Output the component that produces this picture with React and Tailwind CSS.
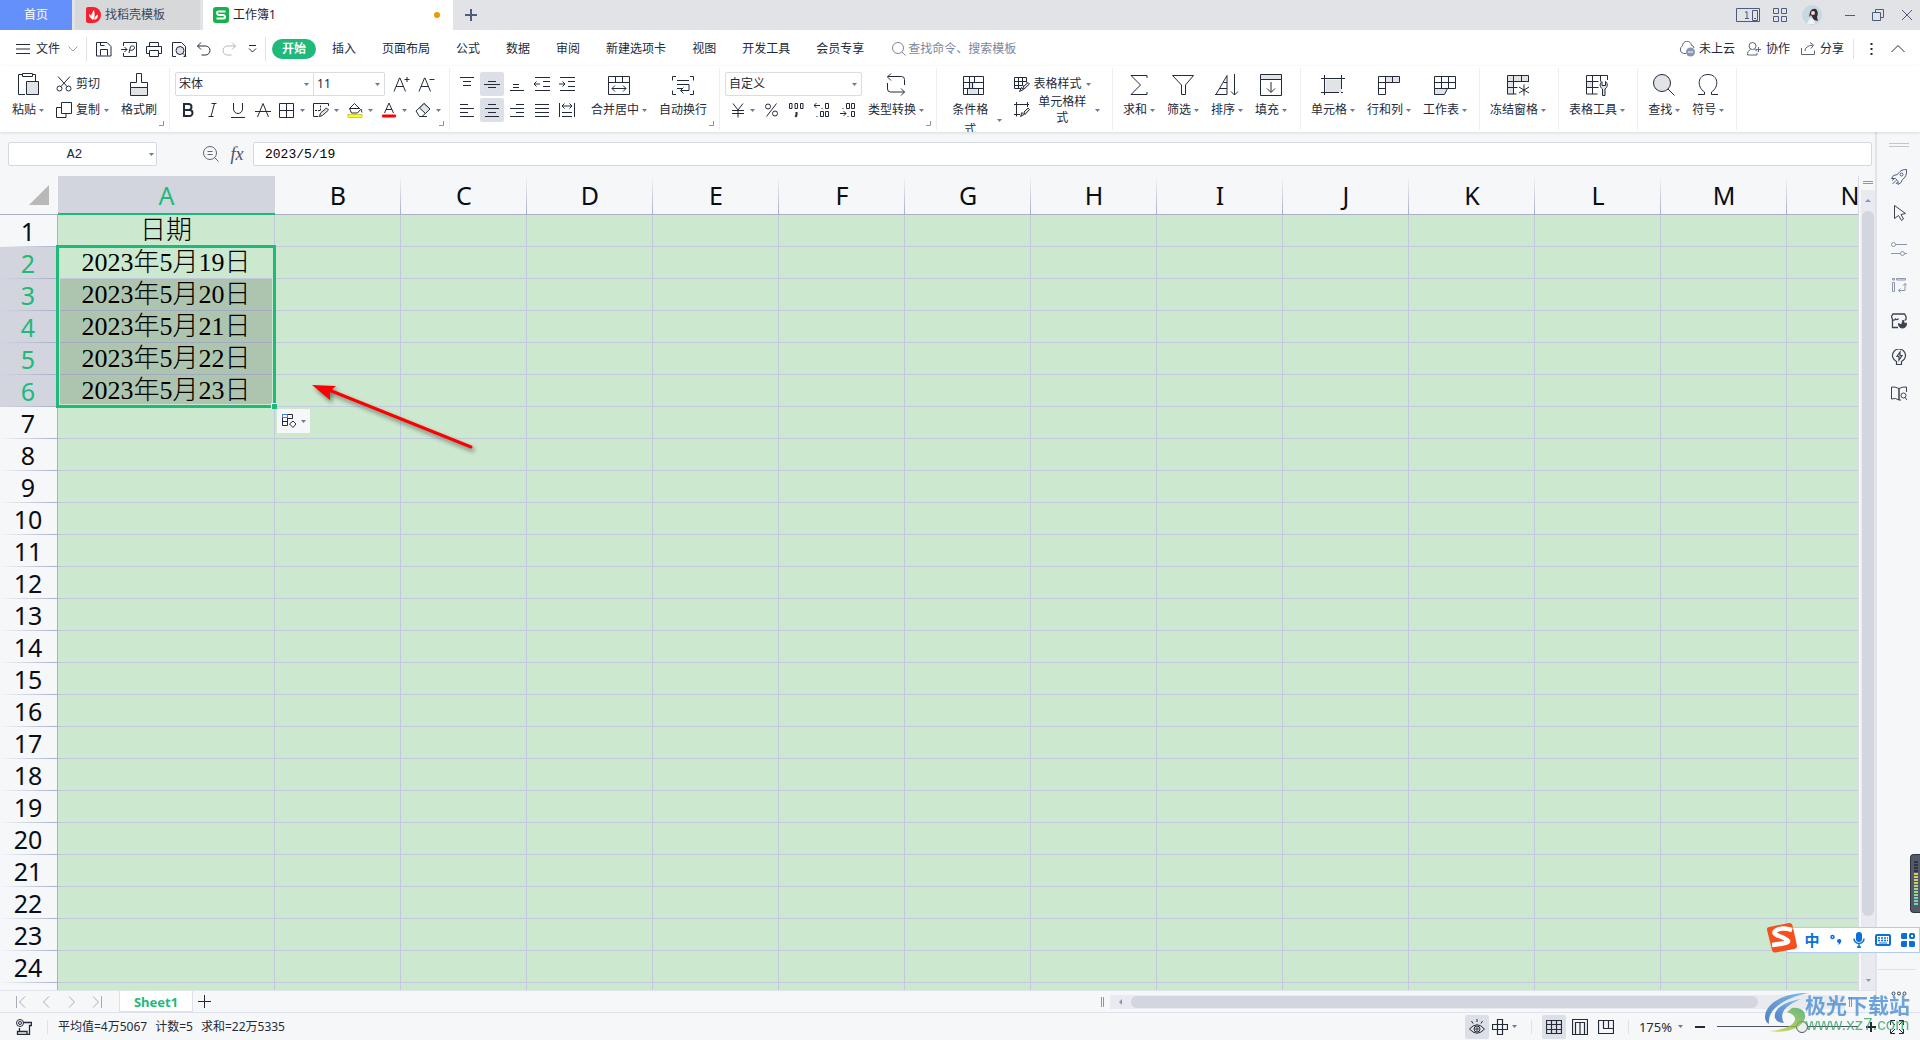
import clsx from "clsx";

const COLUMNS = ["A", "B", "C", "D", "E", "F", "G", "H", "I", "J", "K", "L", "M", "N"];
const COLUMN_A = ["日期", "2023年5月19日", "2023年5月20日", "2023年5月21日", "2023年5月22日", "2023年5月23日"];
const ROWS = Array.from({ length: 25 }, (_, i) => i + 1);
const MENU = ["开始", "插入", "页面布局", "公式", "数据", "审阅", "新建选项卡", "视图", "开发工具", "会员专享"];

function Svg({ w = 16, h = 16, children, className }) {
  return (
    <svg
      width={w}
      height={h}
      viewBox={`0 0 ${w} ${h}`}
      fill="none"
      stroke="currentColor"
      strokeWidth="1"
      aria-hidden="true"
      className={clsx("shrink-0", className)}
    >
      {children}
    </svg>
  );
}

const Caret = ({ className }) => (
  <Svg w={5} h={3} className={clsx("text-[#6b7a99]", className)}>
    <path d="M0 0h5L2.5 3z" fill="currentColor" stroke="none" />
  </Svg>
);

/* ---------- icons: quick access bar ---------- */

const SaveIcon = () => (
  <Svg>
    <path d="M.5 1.5h10.500l4 4v9.500h-14.500zM4.500 14.500v-6h7v6M4.500 1.500v3h4" />
  </Svg>
);
const PdfIcon = () => (
  <Svg>
    <path d="M2.500 5v-3.500h13v14h-13v-3.500M0 8.500h6M3.500 6l2.500 2.500l-2.500 2.500M8 12l1.500-6.500c3-1.500 5 0 3.500 2.500c-1 1.500-3 1.500-4.500 1" />
  </Svg>
);
const PrintIcon = () => (
  <Svg>
    <path d="M3.500 5.500v-4h9v4M3.500 12.500h-3v-7h15v7h-3M3.500 9.500h9v6h-9z" />
  </Svg>
);
const PreviewIcon = () => (
  <Svg>
    <path d="M5 15.500h-3.500v-14h9l4 4v5M14.500 5.500v10h-2" />
    <circle cx="9" cy="9.500" r="4" fill="#dfe1e5" />
    <path d="M12 12.500l3 3" />
  </Svg>
);
const UndoIcon = () => (
  <Svg>
    <path d="M1.500 5h8a4.500 4.500 0 0 1 0 9h-4M5 1.500l-3.500 3.500l3.500 3.500" />
  </Svg>
);
const RedoIcon = () => (
  <Svg className="text-[#b4b6bb]">
    <path d="M14.500 5h-8a4.500 4.500 0 0 0 0 9h4M11 1.500l3.500 3.500l-3.500 3.500" />
  </Svg>
);

/* ---------- icons: ribbon ---------- */

const PasteIcon = () => (
  <Svg w={24} h={24}>
    <path d="M9 22.500h-6.500v-20h4M16 2.500h3.500v7M6.500 1.500h10v3h-10z" />
    <path d="M10.500 9.500h12v13h-12z" fill="#e1e3e7" />
  </Svg>
);
const CutIcon = () => (
  <Svg>
    <circle cx="3.500" cy="12.500" r="2.500" />
    <circle cx="12.500" cy="12.500" r="2.500" />
    <path d="M5 10.500l9-10M11 10.500l-9-10" />
  </Svg>
);
const CopyIcon = () => (
  <Svg>
    <path d="M5.500.500h10v11h-10zM5.500 5.500h-5v10h9.500v-4" />
  </Svg>
);
const PainterIcon = () => (
  <Svg w={24} h={24}>
    <path d="M3.500 15.500h17v8h-17z" fill="#e1e3e7" />
    <path d="M3.500 15.500v-5h6v-9h5v9h6v5" />
  </Svg>
);
const LetterA = ({ up }) => (
  <Svg w={17} h={16}>
    <path d="M1 15.500l5.500-13.500h.500l5.500 13.500M3 10.500h7.500M11.500 3.500h5" />
    {up && <path d="M14 1v5" />}
  </Svg>
);
const BoldIcon = () => (
  <Svg w={12} h={16}>
    <path d="M2 2h4.500a3 3 0 0 1 0 6h-4.500zM2 8h5.500a3 3 0 0 1 0 6h-5.500z" strokeWidth="2" />
  </Svg>
);
const ItalicIcon = () => (
  <Svg w={12} h={16}>
    <path d="M4.500 1.500h5M1.500 14.500h5M7.500 1.500l-3.500 13" />
  </Svg>
);
const UnderlineIcon = () => (
  <Svg>
    <path d="M3.500 1v6a4.500 4.500 0 0 0 9 0v-6M1 15.500h14" />
  </Svg>
);
const StrikeIcon = () => (
  <Svg>
    <path d="M2.500 15l5.500-13.500l5.500 13.500M0 9.500h16" />
  </Svg>
);
const BorderIcon = () => (
  <Svg>
    <path d="M.500 1.500h14v14h-14zM7.500 1.500v14M.500 8.500h14" />
  </Svg>
);
const DrawBorderIcon = () => (
  <Svg>
    <path d="M15.500 4v-2.500h-15v13h5" />
    <path d="M7.500 3.500v5M2 8.500h5" strokeDasharray="2 1" />
    <path d="M6.500 14.500l1-3.500l6-5l2 2l-6 5.500z" fill="#e1e3e7" />
  </Svg>
);
const FillIcon = () => (
  <Svg>
    <path d="M2.500 6.500l5-5l6 6l-3 3.500h-6zM2.500 6.500h10M14 7l1 3.500" />
    <rect x="1" y="12.500" width="14" height="3" fill="#ffff00" stroke="#9b9b2a" strokeWidth=".5" />
  </Svg>
);
const FontColorIcon = () => (
  <Svg>
    <path d="M3.500 11l4.500-10l4.500 10M5 7.500h6" />
    <rect x="1" y="12.500" width="14" height="3" rx="1" fill="#ff0000" stroke="none" />
  </Svg>
);
const EraserIcon = () => (
  <Svg>
    <path d="M1 9l8-7.500l6 5.500l-8 7.500h-2.500z" />
    <path d="M4.500 6l4.500-4.500l6 5.500l-4.500 4.500z" fill="#e1e3e7" />
    <path d="M7 14.500h5" />
  </Svg>
);

const lines = (d) => () => (
  <Svg>
    <path d={d} />
  </Svg>
);
const AlignTop = lines("M1 1.500h14M4 5.500h8M4 9.500h8");
const AlignMiddle = lines("M4 5.500h8M0 8.500h16M4 11.500h8");
const AlignBottom = lines("M4 8.500h6M4 11.500h6M1 14.500h14");
const IndentLess = lines("M1 1.500h15M9 5.500h7M9 10.500h7M1 14.500h15M0 8h6M2.500 5.500l-2.500 2.500l2.500 2.500");
const IndentMore = lines("M1 1.500h15M9 5.500h7M9 10.500h7M1 14.500h15M0 8h6M3.500 5.500l2.500 2.500l-2.500 2.500");
const AlignLeft = lines("M1 2.500h8M1 6.500h14M1 10.500h8M1 14.500h14");
const AlignCenter = lines("M4 2.500h8M1 6.500h14M4 10.500h8M1 14.500h14");
const AlignRight = lines("M7 2.500h8M1 6.500h14M7 10.500h8M1 14.500h14");
const AlignJustify = lines("M1 2.500h14M1 6.500h14M1 10.500h14M1 14.500h14");
const Distribute = lines("M.500 1v14M15.500 1v14M3 10.500h10M3 14.500h10M3 4h10M5.500 1.500l-2.500 2.500l2.500 2.500M10.500 1.500l2.500 2.500l-2.500 2.500");

const big = (children) => () => (
  <Svg w={24} h={24}>
    {children}
  </Svg>
);
const MergeIcon = big(
  <path d="M1.500 4.500h21v18h-21zM1.500 10.500h21M8.500 4.500v6M15.500 4.500v6M5 16.500h14M8 13.500l-3 3l3 3M16 13.500l3 3l-3 3" />
);
const WrapIcon = big(
  <path d="M5 4.500h-3.500v4M19 4.500h3.500v4M5 22.500h-3.500v-4M19 22.500h3.500v-4M6 8.500h12M6 12.500h12M6 16.500h5M18 12.500v6h-8M12.500 15.500l-3 3l3 3" />
);
const ConvertIcon = big(
  <path d="M20.500 13v-5.500a3 3 0 0 0-3-3h-14M7 1.500l-3.500 3.500l3.500 3.500M3.500 11v6a3 3 0 0 0 3 3h14M17 16.500l3.500 3.500l-3.500 3.500" />
);
const ConditionIcon = big(
  <>
    <path d="M6.500 10h6v6h-6zM6.500 16h9v6h-9z" fill="#e1e3e7" stroke="none" />
    <path d="M1.500 4.500h20v18h-20zM1.500 10.500h20M1.500 16.500h20M7.500 4.500v12M12.500 4.500v6M10.500 10.500v6M5.500 16.500v6M16.500 16.500v6" />
  </>
);
const SumIcon = big(<path d="M20 6v-2.500h-16l9.500 9.500l-9.500 9.500h16v-2.500" />);
const FilterIcon = big(<path d="M1.500 3.500h21l-8 9.500v9.500h-4v-9.500z" />);
const SortIcon = big(<path d="M1 22.500l11-19v19M0 22.500h12M5 16.500h7M8.500 10.500h3.500M19.500 2v21M16 19.500l3.500 3.500l3.500-3.500" />);
const FillDownIcon = big(
  <>
    <path d="M1.500 2.500h21v5h-21z" fill="#e1e3e7" />
    <path d="M1.500 7.500v16h21v-16M12 10v10M8 16.500l4 4l4-4" />
  </>
);
const CellIcon = big(
  <>
    <path d="M4.500 7.500h16v13h-16z" fill="#e1e3e7" stroke="none" />
    <path d="M0 6.500h24M3.500 3v20M20.500 3v14M0 20.500h18M20 20.500h2" />
  </>
);
const RowColIcon = big(
  <>
    <path d="M9 4.500h14v6h-14z" fill="#e1e3e7" stroke="none" />
    <path d="M1.500 4.500h21v6h-14v12h-7zM8.500 4.500v6M15.500 4.500v6M1.500 10.500h7M1.500 16.500h7" />
  </>
);
const SheetIcon = big(
  <>
    <path d="M1.500 16.500h13l-3 6h-10z" fill="#e1e3e7" />
    <path d="M1.500 4.500h21v12h-21zM1.500 10.500h21M8.500 4.500v12M15.500 4.500v12M1.500 16.500v6" />
  </>
);
const FreezeIcon = big(
  <>
    <path d="M1 3h21v6h-21zM1 9h7v14h-7z" fill="#e1e3e7" stroke="none" />
    <path d="M22.500 10v-6.500h-21v18.500h9M1.500 9.500h21M1.500 15.500h10M7.500 3.500v18.500M15.500 3.500v6M18 12.500v11M13 15l10 6M23 15l-10 6" />
  </>
);
const TableToolIcon = big(
  <>
    <path d="M1 9h7v7h-7z" fill="#e1e3e7" stroke="none" />
    <path d="M22.500 8v-4.500h-21v18.500h11M1.500 9.500h12M1.500 15.500h12M7.500 3.500v18.500M15.500 3.500v6" />
    <path d="M17.500 23.500v-6.500c-3-2-3-5.500-.500-7.500v4h3.500v-4c2.500 2 2.500 5.500-.500 7.500v6.500z" fill="#e1e3e7" />
  </>
);
const FindIcon = big(
  <>
    <circle cx="10" cy="11" r="8.500" fill="#e1e3e7" />
    <path d="M16 17l6.500 6.500" />
  </>
);
const OmegaIcon = big(<path d="M2 22.500h6.500v-2.500c-8-5-7-17.500 3.500-17.500s11.500 12.500 3.500 17.500v2.500h6.500" />);

const TableStyleIcon = () => (
  <Svg>
    <path d="M8 12.500h-7.500v-11h12v5M.500 5.500h12M.500 9.500h9M4.500 1.500v11M8.500 1.500v8" />
    <path d="M5.500 15.500l2-4l2 2zM9 11l5-4.500l1.500 1.500l-5.500 5z" fill="#e1e3e7" />
  </Svg>
);
const CellStyleIcon = () => (
  <Svg>
    <path d="M0 2.500h15M2.500 0v14.500M0 12.500h6M13.500 0v5" />
    <path d="M6.500 14.500l1.500-4l2 2zM10 10l4-4l1.500 1.500l-4.500 5z" fill="#e1e3e7" />
  </Svg>
);

/* ---------- building blocks ---------- */

function IconButton({ label, children, className }) {
  return (
    <button type="button" aria-label={label} className={clsx("flex items-center justify-center", className)}>
      {children}
    </button>
  );
}

function BigButton({ icon: Icon, label, caret = true }) {
  return (
    <button type="button" className="flex flex-col items-center gap-1">
      <Icon />
      <span className="flex items-center gap-[3px] leading-5">
        {label}
        {caret && <Caret />}
      </span>
    </button>
  );
}

function SmallButton({ icon: Icon, label, caret = true }) {
  return (
    <button type="button" className="flex h-6 items-center gap-1">
      <Icon />
      <span>{label}</span>
      {caret && <Caret />}
    </button>
  );
}

function Group({ children, corner, className }) {
  return (
    <div className={clsx("relative flex shrink-0 gap-3 border-r border-[#eceef1] pr-3 pt-1", className || "pl-2.5")}>
      {children}
      {corner && (
        <Svg w={5} h={5} className="absolute right-[5px] bottom-1 text-[#8a94ab]">
          <path d="M0 4.500h4.500v-4.500" />
        </Svg>
      )}
    </div>
  );
}

function SelectBox({ label, value, className }) {
  return (
    <span className={clsx("relative flex items-center", className)}>
      <select aria-label={label} className="h-full w-full appearance-none bg-transparent pl-[3px] outline-none">
        <option>{value}</option>
      </select>
      <Caret className="pointer-events-none absolute right-1" />
    </span>
  );
}

const Divider = ({ className }) => <span className={clsx("w-px shrink-0 bg-[#dfe2e8]", className)} />;

/* ---------- window title and tabs ---------- */

function TitleBar() {
  return (
    <header className="flex h-[30px] shrink-0 bg-[#e1e3e7]">
      <button type="button" className="w-[72px] bg-[#6490fb] text-white">首页</button>
      <button type="button" className="ml-[3px] flex w-[125px] items-center gap-1 bg-[#d7d8da] pl-[11px] text-[#3d4757]">
        <svg width="15" height="16" viewBox="0 0 15 16" aria-hidden="true">
          <path d="M0 2q0-2 2-2h5a8 8 0 0 1 0 16h-5q-2 0-2-2z" fill="#f5222d" />
          <path d="M7 13c-3-2-2-6 1-10c1 4 1 8-1 10zM6 12c-2-1-3-3-3-5c2 1 3 2 3 5zM8 12.500c1-3 2-4 4-5c0 3-1 5-4 5z" fill="#fff" />
        </svg>
        找稻壳模板
      </button>
      <button type="button" className="ml-[3px] flex w-[250px] items-center gap-1 bg-white pl-2.5 pr-[13px] text-[#1d2433]">
        <svg width="16" height="16" viewBox="0 0 16 16" aria-hidden="true">
          <rect width="16" height="16" rx="3" fill="#14b24b" />
          <path d="M12.500 4.500h-7q-1.500 0-1.500 1.500t1.500 2h5q1.500.500 1.500 2t-1.500 1.500h-7" fill="none" stroke="#fff" strokeWidth="2" />
        </svg>
        工作簿1
        <span className="ml-auto size-1.5 rounded-full bg-[#ea9c00]" />
      </button>
      <IconButton label="新建标签" className="w-9 text-[#4d5b7c]">
        <Svg w={12} h={12}>
          <path d="M6 0v12M0 6h12" strokeWidth="2" />
        </Svg>
      </IconButton>
      <div className="ml-auto flex items-center text-[#4d5b7c]">
        <IconButton label="窗口数量">
          <Svg w={24} h={14}>
            <path d="M.500.500h23v13h-23zM16.500 2.500h5v10h-5zM18 10.500h2M9 4.500l2-1v7M9 10.500h4" />
          </Svg>
        </IconButton>
        <IconButton label="应用" className="ml-[13px]">
          <Svg w={14} h={14}>
            <path d="M.500.500h5v5h-5zM8.500.500h5v5h-5zM.500 8.500h5v5h-5zM8.500 8.500h5v5h-5z" />
          </Svg>
        </IconButton>
        <IconButton label="账号" className="ml-[15px]">
          <svg width="20" height="20" viewBox="0 0 20 20" aria-hidden="true">
            <circle cx="10" cy="10" r="10" fill="#c6d9e1" />
            <path d="M8 7q2-4 6-3q3 3 1 8l1 4l-4-1l-3-5l-2 2z" fill="#3a2b33" />
            <circle cx="11" cy="8" r="2" fill="#f0d7cf" />
            <path d="M5 19l3-6l4 2l1 4z" fill="#eef4f6" />
          </svg>
        </IconButton>
        <Divider className="ml-2.5 h-5 bg-[#c9ccd3]" />
        <IconButton label="最小化" className="ml-3">
          <Svg w={10} h={12}>
            <path d="M0 6.500h10" />
          </Svg>
        </IconButton>
        <IconButton label="还原" className="ml-[17px]">
          <Svg w={12} h={12}>
            <path d="M.500 3.500h8v8h-8zM3.500 3.500v-3h8v8h-3" />
          </Svg>
        </IconButton>
        <IconButton label="关闭" className="mr-2 ml-[18px]">
          <Svg w={10} h={10}>
            <path d="M0 0l10 10M10 0l-10 10" />
          </Svg>
        </IconButton>
      </div>
    </header>
  );
}

function MenuBar() {
  return (
    <nav className="flex h-9 shrink-0 items-center bg-white pt-0.5">
      <button type="button" className="flex items-center gap-1.5 pl-4">
        <Svg w={14} h={10}>
          <path d="M0 .500h14M0 5h14M0 9.500h14" />
        </Svg>
        文件
        <Svg w={10} h={6} className="ml-0.5 text-[#9aa0ac]">
          <path d="M.500.500l4.500 4.500l4.500-4.500" />
        </Svg>
      </button>
      <Divider className="mr-[9px] ml-2 h-6" />
      <div className="flex items-center gap-[9px]">
        <IconButton label="保存"><SaveIcon /></IconButton>
        <IconButton label="输出为PDF"><PdfIcon /></IconButton>
        <IconButton label="打印"><PrintIcon /></IconButton>
        <IconButton label="打印预览"><PreviewIcon /></IconButton>
        <IconButton label="撤销"><UndoIcon /></IconButton>
        <IconButton label="恢复"><RedoIcon /></IconButton>
        <IconButton label="自定义快速访问工具栏" className="ml-0.5">
          <Svg w={9} h={8}>
            <path d="M1 .500h7M1 3.500l3.500 3.500l3.500-3.500" />
          </Svg>
        </IconButton>
      </div>
      <Divider className="ml-2 h-6" />
      <div className="ml-1.5 flex items-center gap-1.5">
        {MENU.map((name, i) => (
          <button
            key={name}
            type="button"
            className={clsx(
              "h-5 px-2.5 whitespace-nowrap",
              i === 0 && "rounded-full bg-[#20b97c] font-bold text-white"
            )}
          >
            {name}
          </button>
        ))}
      </div>
      <label className="ml-[18px] flex items-center gap-0.5 text-[#7c869e]">
        <Svg w={14} h={14}>
          <circle cx="6" cy="6" r="5.500" />
          <path d="M10 10l3.500 3.500" />
        </Svg>
        <input
          type="text"
          aria-label="查找命令"
          placeholder="查找命令、搜索模板"
          className="w-32 bg-transparent outline-none placeholder:text-[#7c869e]"
        />
      </label>
      <div className="ml-auto flex items-center">
        <button type="button" className="flex items-center gap-1">
          <Svg className="text-[#5d6679]">
            <path d="M7 12.500h-2.500a4 4 0 0 1-1-7.500a4.500 4.500 0 0 1 9-.500" />
            <path d="M12.500 4a4 4 0 0 1 2.500 3" />
            <circle cx="11.500" cy="11" r="4.500" fill="#8b96b3" stroke="none" />
            <path d="M9 11h5" stroke="#fff" />
          </Svg>
          未上云
        </button>
        <button type="button" className="ml-3 flex items-center gap-[5px]">
          <Svg w={14} h={14} className="text-[#5d6679]">
            <circle cx="5.500" cy="4" r="3.500" />
            <path d="M3.500 7.500c-2 1-3 2.500-3 5.500h9.500v-2M7.500 7.500q2 .500 2.500 2M9 7.500h5M11.500 5v5" />
          </Svg>
          协作
        </button>
        <button type="button" className="ml-[11px] flex items-center gap-[5px]">
          <Svg w={14} h={14} className="text-[#5d6679]">
            <path d="M.500 6v6.500h13v-4M4 9q0-5 8-6M9 .500l3.500 2.500l-2.500 3.500" />
          </Svg>
          分享
        </button>
        <Divider className="ml-[9px] h-5" />
        <IconButton label="更多" className="ml-4">
          <Svg w={3} h={12}>
            <path d="M1.500 0v2M1.500 5v2M1.500 10v2" strokeWidth="2" />
          </Svg>
        </IconButton>
        <IconButton label="收起功能区" className="mr-[15px] ml-[18px]">
          <Svg w={14} h={8}>
            <path d="M.500 7l6.500-6.500l6.500 6.500" />
          </Svg>
        </IconButton>
      </div>
    </nav>
  );
}

/* ---------- ribbon ---------- */

const FORMAT_TOOLS = [
  ["边框", BorderIcon],
  ["绘制边框", DrawBorderIcon],
  ["填充颜色", FillIcon],
  ["字体颜色", FontColorIcon],
  ["清除", EraserIcon],
];

const ALIGN_TOOLS = [
  ["顶端对齐", AlignTop],
  ["垂直居中", AlignMiddle, true],
  ["底端对齐", AlignBottom],
  ["减少缩进量", IndentLess],
  ["增加缩进量", IndentMore],
  ["左对齐", AlignLeft],
  ["水平居中", AlignCenter, true],
  ["右对齐", AlignRight],
  ["两端对齐", AlignJustify],
  ["分散对齐", Distribute],
];

function Ribbon() {
  return (
    <section className="relative z-10 flex h-[66px] shrink-0 items-stretch overflow-hidden bg-white pt-0.5 pb-0.5 shadow-[0_1px_3px_rgba(0,0,0,0.12)]">
      <Group className="pl-3" corner>
        <BigButton icon={PasteIcon} label="粘贴" />
        <div className="flex flex-col gap-0.5">
          <SmallButton icon={CutIcon} label="剪切" caret={false} />
          <SmallButton icon={CopyIcon} label="复制" />
        </div>
        <BigButton icon={PainterIcon} label="格式刷" caret={false} />
      </Group>

      <Group className="w-[280px] pl-[5px]" corner>
        <div className="flex flex-col gap-0.5">
          <div className="flex h-6">
            <div className="flex w-[210px] divide-x divide-[#d9dce3] rounded-xs border border-[#d9dce3]">
              <SelectBox label="字体" value="宋体" className="w-[138px]" />
              <SelectBox label="字号" value="11" className="flex-1" />
            </div>
            <IconButton label="增大字号" className="ml-2"><LetterA up /></IconButton>
            <IconButton label="减小字号" className="ml-2"><LetterA /></IconButton>
          </div>
          <div className="flex h-6">
            <IconButton label="加粗" className="w-[25px]"><BoldIcon /></IconButton>
            <IconButton label="倾斜" className="w-[25px]"><ItalicIcon /></IconButton>
            <IconButton label="下划线" className="w-[25px]"><UnderlineIcon /></IconButton>
            <IconButton label="删除线" className="w-[25px]"><StrikeIcon /></IconButton>
            {FORMAT_TOOLS.map(([label, Icon]) => (
              <IconButton key={label} label={label} className="w-[34px] gap-[5px]">
                <Icon />
                <Caret />
              </IconButton>
            ))}
          </div>
        </div>
      </Group>

      <Group className="w-[270px] pl-[5px]" corner>
        <div className="grid grid-cols-5 content-start gap-x-px gap-y-0.5">
          {ALIGN_TOOLS.map(([label, Icon, active]) => (
            <IconButton key={label} label={label} className={clsx("size-6 rounded-xs", active && "bg-[#dce0e6]")}>
              <Icon />
            </IconButton>
          ))}
        </div>
        <BigButton icon={MergeIcon} label="合并居中" />
        <BigButton icon={WrapIcon} label="自动换行" caret={false} />
      </Group>

      <Group className="w-[217px] pl-[5px]" corner>
        <div className="flex w-[137px] shrink-0 flex-col gap-0.5">
          <SelectBox label="数字格式" value="自定义" className="h-6 rounded-xs border border-[#d9dce3]" />
          <div className="flex h-6 items-center justify-between pr-1.5 pl-1.5">
            <IconButton label="货币" className="gap-[5px]">
              <Svg w={14}>
                <path d="M2 1.500l5 6.500l5-6.500M7 8v7.500M1 8.500h12M1 11.500h12" />
              </Svg>
              <Caret />
            </IconButton>
            <IconButton label="百分比">
              <Svg w={13}>
                <circle cx="3" cy="4.500" r="2.500" />
                <circle cx="10" cy="11.500" r="2.500" />
                <path d="M11.500 1.500l-10 13" />
              </Svg>
            </IconButton>
            <IconButton label="千位分隔">
              <Svg w={17}>
                <path d="M1.500 1.500h2.500v5h-2.500zM7 1.500h2.500v5h-2.500zM12.500 1.500h2.500v5h-2.500z" />
                <path d="M8.500 10v3l-1 2" strokeWidth="2" />
              </Svg>
            </IconButton>
            <IconButton label="增加小数位">
              <Svg>
                <path d="M0 3.500h6M2.500 1l-2.500 2.500l2.500 2.500M8 6v1M11.500 1.500h3v5h-3zM3 14v1M6.500 9.500h3v5h-3zM11.500 9.500h3v5h-3z" />
              </Svg>
            </IconButton>
            <IconButton label="减少小数位">
              <Svg>
                <path d="M0 11.500h6M3.500 9l2.500 2.500l-2.500 2.500M8 14v1M11.500 9.500h3v5h-3zM3 6v1M6.500 1.500h3v5h-3zM11.500 1.500h3v5h-3z" />
              </Svg>
            </IconButton>
          </div>
        </div>
        <div className="-ml-1.5 flex">
          <BigButton icon={ConvertIcon} label="类型转换" />
        </div>
      </Group>

      <Group className="w-[176px] pl-2.5">
        <BigButton icon={ConditionIcon} label="条件格式" />
        <div className="flex flex-col gap-0.5">
          <SmallButton icon={TableStyleIcon} label="表格样式" />
          <SmallButton icon={CellStyleIcon} label="单元格样式" />
        </div>
      </Group>

      <Group className="w-[188px] pl-2.5">
        <BigButton icon={SumIcon} label="求和" />
        <BigButton icon={FilterIcon} label="筛选" />
        <BigButton icon={SortIcon} label="排序" />
        <BigButton icon={FillDownIcon} label="填充" />
      </Group>

      <Group>
        <BigButton icon={CellIcon} label="单元格" />
        <BigButton icon={RowColIcon} label="行和列" />
        <BigButton icon={SheetIcon} label="工作表" />
      </Group>

      <Group>
        <BigButton icon={FreezeIcon} label="冻结窗格" />
      </Group>

      <Group>
        <BigButton icon={TableToolIcon} label="表格工具" />
      </Group>

      <Group>
        <BigButton icon={FindIcon} label="查找" />
        <BigButton icon={OmegaIcon} label="符号" />
      </Group>
    </section>
  );
}

/* ---------- formula bar ---------- */

function FormulaBar() {
  return (
    <div className="flex h-11 shrink-0 items-center px-[3px] pb-0 pl-2 pt-0">
      <div className="relative flex h-6 w-[149px] items-center rounded-xs border border-[#d5d8df] bg-white">
        <input
          aria-label="名称框"
          defaultValue="A2"
          className="h-full w-full bg-transparent pr-4 text-center font-['Liberation_Mono',monospace] text-[13px] outline-none"
        />
        <Caret className="absolute right-0.5" />
      </div>
      <IconButton label="浏览公式结果" className="ml-[46px] text-[#5d6679]">
        <Svg>
          <circle cx="7" cy="7" r="6.500" />
          <path d="M11.500 11.500l4 4M4.500 5.500h5M4.500 8.500h5" />
        </Svg>
      </IconButton>
      <button type="button" className="ml-2.5 w-4 font-['Liberation_Serif',serif] text-[18px] leading-6 text-[#4a5263] italic">
        fx
      </button>
      <input
        aria-label="编辑栏"
        defaultValue="2023/5/19"
        className="ml-2 h-6 min-w-0 flex-1 rounded-xs border border-[#d5d8df] bg-white pl-[11px] font-['Liberation_Mono',monospace] text-[13px] text-black outline-none"
      />
    </div>
  );
}

/* ---------- sheet ---------- */

function Grid() {
  return (
    <div className="relative min-h-0 flex-1 overflow-hidden">
      <table className="w-[1913px] table-fixed border-separate border-spacing-0">
        <colgroup>
          <col className="w-[58px]" />
          <col className="w-[217px]" />
          {COLUMNS.slice(1).map((c) => (
            <col key={c} className="w-[126px]" />
          ))}
        </colgroup>
        <thead>
          <tr className="h-[39px] text-[25px] leading-8">
            <td className="border-b border-[#a9b0c8] bg-[#f6f7f9]">
              <Svg w={20} h={20} className="ml-[29px] text-[#b8b8b8]">
                <path d="M20 0v20h-20z" fill="currentColor" stroke="none" />
              </Svg>
            </td>
            {COLUMNS.map((c, i) => (
              <th
                key={c}
                scope="col"
                className={clsx(
                  "p-0 font-normal",
                  i === 0
                    ? "border-b-2 border-[#20b97c] bg-[#d2d5dd] text-[#20b97c]"
                    : "border-b border-[#a9b0c8] bg-[#f6f7f9] bg-[linear-gradient(to_bottom,transparent,#a9b0c8)] bg-[length:1px_100%] bg-right bg-no-repeat text-[#0b0d14]"
                )}
              >
                {c}
              </th>
            ))}
          </tr>
        </thead>
        <tbody>
          {ROWS.map((r) => {
            const selected = r >= 2 && r <= 6;
            return (
              <tr key={r} className="h-8">
                <th
                  scope="row"
                  className={clsx(
                    "border-r border-[#a9b0c8] bg-[linear-gradient(to_right,transparent,#a9b0c8)] bg-[length:100%_1px] bg-bottom bg-no-repeat p-0 pr-px text-[25px] leading-[31px] font-normal",
                    selected ? "bg-[#d2d5dd] text-[#20b97c]" : "bg-[#f6f7f9] text-[#0b0d14]"
                  )}
                >
                  {r}
                </th>
                {COLUMNS.map((c, i) => (
                  <td
                    key={c}
                    className={clsx(
                      "border-r border-b border-[#c3c8dc] p-0 text-center font-['Liberation_Serif','Noto_Sans_CJK_SC',serif] text-[26px] leading-[31px] font-light text-black",
                      i === 0 && selected && r > 2 ? "border-b-[#a3a9be] bg-[#adc4af]" : "bg-[#cce8cf]"
                    )}
                  >
                    {i === 0 && COLUMN_A[r - 1]}
                  </td>
                ))}
              </tr>
            );
          })}
        </tbody>
      </table>

      {/* selection frame, fill handle and paste options */}
      <div className="pointer-events-none absolute top-[69px] left-14 h-[163px] w-[220px] border-3 border-[#20b97c] shadow-[inset_0_0_0_1px_#cce8cf]">
        <span className="absolute -right-1 -bottom-1 size-1.5 border-t border-l border-white bg-[#20b97c]" />
      </div>
      <button
        type="button"
        aria-label="自动填充选项"
        className="absolute top-[233px] left-[277px] flex h-6 w-[33px] items-center gap-1 bg-[#f6f7f9] pl-[5px]"
      >
        <Svg w={15}>
          <path d="M.500 4.500h5v8h-5zM.500 8.500h5M.500 4.500v-3h10v4h-5" />
          <path d="M.500 1.500h5v3h-5z" stroke="#4a7de0" />
          <path d="M11 8l3 3l-3 3.500l-3.500-3.500z" fill="#fff" />
        </Svg>
        <Caret />
      </button>

      <svg width="180" height="80" viewBox="0 0 180 80" aria-hidden="true" className="pointer-events-none absolute top-[200px] left-[305px] drop-shadow-[2px_3px_2px_rgba(0,0,0,0.45)]">
        <path d="M24 14L166 71" stroke="#ff0000" strokeWidth="3" strokeLinecap="round" />
        <path d="M7 9l24 1l-6 5l0 9z" fill="#ff0000" />
      </svg>
    </div>
  );
}

function VerticalScroll() {
  return (
    <div className="flex w-[17px] shrink-0 flex-col border-l border-[#d9dce5] pl-0.5">
      <span className="mx-auto mt-[5px] mb-1.5 h-[3px] w-2.5 border-y border-[#8b96b3]" />
      <div className="flex min-h-0 flex-1 flex-col items-center bg-[#e9eaf0]">
        <IconButton label="向上滚动" className="h-[21px] w-full">
          <Svg w={6} h={3} className="text-[#8b96b3]">
            <path d="M0 3h6l-3-3z" fill="currentColor" stroke="none" />
          </Svg>
        </IconButton>
        <span className="w-3 flex-1 rounded-full bg-[#d3d6de]" />
        <IconButton label="向下滚动" className="mt-[54px] h-5 w-full">
          <Caret className="text-[#8b96b3]" />
        </IconButton>
      </div>
    </div>
  );
}

function SideBar() {
  return (
    <aside className="flex w-[45px] shrink-0 flex-col items-center border-l-2 border-[#e1e3ea] pt-[11px] text-[#3b4252]">
      <span className="h-1 w-5 border-y border-[#c3c5ca]" />
      <div className="mt-[22px] flex flex-1 flex-col gap-5">
        <IconButton label="快捷操作" className="text-[#4d5b7c]">
          <Svg>
            <path d="M15.500.500c-5 0-7 2-9 5l-4 1l-2 3h4l2.500 3v3l3-2l1.500-3c3-2 4.500-5 4-10zM1 11.500l2-1.500M1.500 15l3.500-3.500M5 15l1.500-2" />
            <circle cx="10.500" cy="5.500" r="1.500" />
          </Svg>
        </IconButton>
        <IconButton label="选择">
          <Svg>
            <path d="M3.500.500l11 8l-4.500 1l2.500 4.500l-2 1.500l-3-5l-4 3z" />
          </Svg>
        </IconButton>
        <IconButton label="属性" className="text-[#8b96a8]">
          <Svg>
            <circle cx="2.500" cy="3.500" r="2" />
            <path d="M4.500 3.500h11.500M0 12.500h9.500M13.500 12.500h2.500" />
            <circle cx="11.500" cy="12.500" r="2" />
          </Svg>
        </IconButton>
        <IconButton label="分析" className="text-[#8b96a8]">
          <Svg>
            <path d="M1.500 1.500h2v1.500h-2zM5.500 1.500h9v1.500h-9zM1.500 5.500h2v9h-2zM14 6.500v7h-6.500M12 8.500l2-2l2 2M9.500 11.500l-2 2l2 2" />
          </Svg>
        </IconButton>
        <IconButton label="素材库">
          <Svg>
            <path d="M7 14.500h-5.500v-8l-1-3l1.500-2.500h11.500l1.500 2.500v3l-1.500 1M1.500 6.500q2 1.500 3-.500q2 1.500 3-.500" strokeWidth="1.300" />
            <path d="M11.500 15c-3 0-4-2-4-4.500l3 1.500l1.500-5l1.500 3.500l2-.500c0 3-1 5-4 5z" fill="currentColor" />
          </Svg>
        </IconButton>
        <IconButton label="智能助手">
          <Svg>
            <path d="M5.500 12.500a6.500 6.500 0 1 1 5 0v3h-5zM9 3l-3 4.500h2v3.500l3-4.500h-2z" strokeWidth="1.200" />
          </Svg>
        </IconButton>
        <IconButton label="学习">
          <Svg>
            <path d="M8 3.500q-4-2-7.500-1.500v12q4-1.500 7.500 1zM8 3.500q4-2 7.500-1.500v5M8 3.500v11.500h2" />
            <circle cx="12.500" cy="10.500" r="2.500" />
            <path d="M14 12.500l2 2.500" />
          </Svg>
        </IconButton>
      </div>
      <span className="mr-1 h-px w-[38px] bg-[#dfe1e5]" />
      <IconButton label="更多面板" className="mt-[21px] mb-4">
        <Svg h={5}>
          <circle cx="2.500" cy="2.500" r="1.500" />
          <circle cx="8" cy="2.500" r="1.500" />
          <circle cx="13.500" cy="2.500" r="1.500" />
        </Svg>
      </IconButton>
    </aside>
  );
}

function SheetTabs() {
  const arrow = "text-[#a7abb5]";
  return (
    <div className="flex h-[22px] shrink-0 items-center border-t border-[#e1e3ea]">
      <div className="flex w-[119px] items-center pl-4">
        <IconButton label="第一个工作表" className={arrow}>
          <Svg w={10} h={12}><path d="M.500 0v12M9 .500l-5.500 5.500l5.500 5.500" /></Svg>
        </IconButton>
        <IconButton label="上一个工作表" className={clsx(arrow, "ml-4")}>
          <Svg w={8} h={12}><path d="M7 .500l-5.500 5.500l5.500 5.500" /></Svg>
        </IconButton>
        <IconButton label="下一个工作表" className={clsx(arrow, "ml-[18px]")}>
          <Svg w={8} h={12}><path d="M1 .500l5.500 5.500l-5.500 5.500" /></Svg>
        </IconButton>
        <IconButton label="最后一个工作表" className={clsx(arrow, "ml-4")}>
          <Svg w={10} h={12}><path d="M9.500 0v12M1 .500l5.500 5.500l-5.500 5.500" /></Svg>
        </IconButton>
      </div>
      <button type="button" className="h-full w-[74px] border-x border-b border-[#dfe1e8] bg-white pt-0.5 text-[13px] leading-4 font-bold text-[#20b97c]">
        Sheet1
      </button>
      <IconButton label="新建工作表" className="ml-[5px]">
        <Svg w={13} h={13}><path d="M6.500 0v13M0 6.500h13" /></Svg>
      </IconButton>
      <div className="ml-auto flex w-[774px] items-center">
        <span className="h-2.5 w-[3px] border-x border-[#8b96b3]" />
        <div className="ml-1.5 flex h-3.5 flex-1 items-center bg-[#e9eaf0]">
          <IconButton label="向左滚动" className="w-[21px]">
            <Svg w={3} h={6} className="text-[#8b96b3]"><path d="M3 0v6l-3-3z" fill="currentColor" stroke="none" /></Svg>
          </IconButton>
          <span className="h-3 flex-1 rounded-full bg-[#d3d6de]" />
          <IconButton label="向右滚动" className="ml-[66px] w-[21px]">
            <Svg w={3} h={6} className="text-[#8b96b3]"><path d="M0 0v6l3-3z" fill="currentColor" stroke="none" /></Svg>
          </IconButton>
        </div>
        <span className="mr-[23px] ml-1 h-2.5 w-[3px] border-x border-[#8b96b3]" />
      </div>
    </div>
  );
}

function StatusBar() {
  return (
    <footer className="flex h-7 shrink-0 items-center border-t border-[#dfe2ea]">
      <IconButton label="录制宏" className="ml-4">
        <Svg>
          <circle cx="4" cy="4" r="3.500" />
          <circle cx="4" cy="4" r="1.500" />
          <path d="M7 3.500h8.500v3h-2v9h-12v-3h9.500v2.500M3.500 9v3.500" strokeWidth="1.300" />
        </Svg>
      </IconButton>
      <Divider className="ml-[15px] h-3.5" />
      <div className="ml-2.5 flex gap-2">
        <span>平均值=4万5067</span>
        <span>计数=5</span>
        <span>求和=22万5335</span>
      </div>
      <div className="ml-auto flex items-center">
        <IconButton label="护眼模式" className="size-6 rounded-xs bg-[#dce0e6]">
          <Svg>
            <path d="M.500 10q7.500-8.500 15 0q-7.500 8.500-15 0zM8 0v3M2.500 2l1.500 2.500M13.500 2l-1.500 2.500" />
            <circle cx="8" cy="10" r="3" />
            <circle cx="8" cy="10" r="1.200" />
          </Svg>
        </IconButton>
        <IconButton label="阅读模式" className="ml-[3px] gap-1">
          <Svg><path d="M5.500.500h5v15h-5zM.500 5.500h15v5h-15z" strokeWidth="1.200" /></Svg>
          <Caret />
        </IconButton>
        <Divider className="ml-3.5 h-3.5" />
        <IconButton label="普通视图" className="ml-2.5 size-6 rounded-xs bg-[#dce0e6]">
          <Svg><path d="M.500 1.500h15v13h-15zM.500 5.500h15M.500 10.500h15M5.500 1.500v13M10.500 1.500v13" strokeWidth="1.200" /></Svg>
        </IconButton>
        <IconButton label="页面布局视图" className="ml-1.5">
          <Svg><path d="M.500.500h15v15h-15zM3.500 3.500h9v12h-9zM8 3.500v12" strokeWidth="1.200" /></Svg>
        </IconButton>
        <IconButton label="分页预览" className="ml-2.5">
          <Svg><path d="M.500 1.500h15v13h-15zM5.500 1.500v8h10M10.500 1.500v8" strokeWidth="1.200" /></Svg>
        </IconButton>
        <Divider className="ml-3.5 h-3.5" />
        <button type="button" className="ml-2.5 flex items-center gap-1.5 text-[13px]">
          175%
          <Caret />
        </button>
        <IconButton label="缩小" className="ml-3">
          <Svg w={10} h={10}><path d="M0 5h10" strokeWidth="2" /></Svg>
        </IconButton>
        <input
          type="range"
          aria-label="缩放比例"
          defaultValue="61"
          className="ml-3 h-4 w-[141px] appearance-none bg-[linear-gradient(#4d5468,#4d5468)] bg-[length:100%_1px] bg-center bg-no-repeat [&::-webkit-slider-thumb]:size-3 [&::-webkit-slider-thumb]:appearance-none [&::-webkit-slider-thumb]:rounded-full [&::-webkit-slider-thumb]:border [&::-webkit-slider-thumb]:border-[#4d5468] [&::-webkit-slider-thumb]:bg-[#eeeeee]"
        />
        <IconButton label="放大" className="ml-2">
          <Svg w={10} h={10}><path d="M0 5h10M5 0v10" strokeWidth="2" /></Svg>
        </IconButton>
        <IconButton label="全屏显示" className="mr-4 ml-3.5">
          <Svg w={14} h={14}>
            <path d="M.500 5v-4.500h4.500M9 .500h4.500v4.500M.500 9v4.500h4.500M13.500 9v4.500h-4.500M1 1l4 4M13 1l-4 4M1 13l4-4M13 13l-4-4" />
          </Svg>
        </IconButton>
      </div>
    </footer>
  );
}

/* ---------- floating things over the window ---------- */

function InputMethodBar() {
  return (
    <div className="absolute right-0 bottom-[87px] flex h-[26px] w-[154px] items-center text-[#0a6fd8]">
      <div className="absolute inset-y-0 right-0 left-5 border border-[#b3cdee] bg-white" />
      <svg width="32" height="32" viewBox="0 0 32 32" aria-hidden="true" className="relative -mt-1 shrink-0">
        <path d="M3 5l20-4q3-.500 3.500 2.500l4.500 20q.500 3-2.500 3.500l-19 3.500q-3 .500-3.500-2.500l-5-20q-.500-2.500 2-3z" fill="#f4511e" />
        <path d="M26 8q-9-3-15 0t2 6t9 5t-16 4" fill="none" stroke="#fff" strokeWidth="4.500" />
      </svg>
      <div className="relative flex flex-1 items-center justify-between pr-[5px] pl-1.5">
        <button type="button" className="w-4 text-[15px] leading-4 font-bold">中</button>
        <IconButton label="标点">
          <Svg w={12} h={12}>
            <circle cx="2.500" cy="3" r="1.500" strokeWidth="1.500" />
            <path d="M9 5a2 2 0 0 1 2 3q-.500 2-3 3l1-2a2 2 0 0 1 0-4z" fill="currentColor" stroke="none" />
          </Svg>
        </IconButton>
        <IconButton label="语音">
          <Svg w={12}>
            <rect x="3" y="0" width="6" height="10" rx="3" fill="currentColor" stroke="none" />
            <path d="M1 6.500a5 5 0 0 0 10 0M6 12v4M4 15h4" strokeWidth="1.500" />
          </Svg>
        </IconButton>
        <IconButton label="软键盘">
          <Svg h={12}>
            <rect x="1" y="1" width="14" height="10" rx="1" strokeWidth="2" />
            <path d="M3 4h10M3 6.500h10" strokeWidth="1.500" strokeDasharray="2 1" />
            <path d="M4 9h8" />
          </Svg>
        </IconButton>
        <IconButton label="工具箱">
          <Svg w={14} h={14}>
            <path d="M0 1.500q0-1.500 1.500-1.500h4.500v6h-4.500q-1.500 0-1.500-1.500zM0 9.500q0-1.500 1.500-1.500h4.500v4.500q0 1.500-1.500 1.500h-3q-1.500 0-1.500-1.500zM8 8h4.500q1.500 0 1.500 1.500v3q0 1.500-1.500 1.500h-3q-1.500 0-1.500-1.500z" fill="currentColor" stroke="none" />
            <rect x="9" y="1" width="4" height="4" rx="1" strokeWidth="2" />
          </Svg>
        </IconButton>
      </div>
    </div>
  );
}

function LevelMeter() {
  return (
    <div className="absolute right-0 bottom-[127px] h-[59px] w-2.5 rounded-l-sm border border-r-0 border-[#30343f] bg-[#555a68] py-1.5 pl-[3px]">
      <div className="h-full w-1 bg-[linear-gradient(#33363f_25%,#e6c558_26%,#a7d98a_60%,#5fd8cf)] mask-[repeating-linear-gradient(#000_0_2px,transparent_2px_3px)]" />
    </div>
  );
}

function SiteMark() {
  return (
    <div className="pointer-events-none absolute right-2.5 bottom-1.5 flex items-center opacity-80">
      <svg width="44" height="42" viewBox="0 0 44 42" aria-hidden="true">
        <defs>
          <linearGradient id="markTop" x1="0" y1="1" x2="1" y2="0">
            <stop offset="0" stopColor="#2d62b8" />
            <stop offset="1" stopColor="#62b6ea" />
          </linearGradient>
          <linearGradient id="markEnd" x1="0" y1="1" x2="1" y2="0">
            <stop offset="0" stopColor="#d8d43c" />
            <stop offset="1" stopColor="#3fa95c" />
          </linearGradient>
        </defs>
        <path d="M44 1c-22-1-44 9-44 24q0 5 4 7c-2-14 14-26 40-31z" fill="url(#markTop)" />
        <path d="M36 7c-18 3-28 11-26 19q2 5 9 5c-5-9 0-17 17-24z" fill="url(#markTop)" />
        <path d="M27 16c10-1 14 4 13 10c-3 10-18 16-36 13c14-1 24-5 26-11q1-5-8-8z" fill="url(#markEnd)" />
      </svg>
      <div className="-ml-1 text-center">
        <p className="text-[21px] leading-6 font-bold whitespace-nowrap text-[#4a8fd3]">极光下载站</p>
        <p className="font-['Liberation_Sans',sans-serif] text-[17px] leading-4 whitespace-nowrap text-[#36a862]">www.xz7.com</p>
      </div>
    </div>
  );
}

export default function App() {
  return (
    <div className="relative flex h-screen flex-col overflow-hidden bg-[#f6f7f9] font-['Noto_Sans','Noto_Sans_CJK_SC',sans-serif] text-[12px] leading-4 text-[#232a3a]">
      <TitleBar />
      <MenuBar />
      <Ribbon />
      <div className="flex min-h-0 flex-1">
        <main className="flex min-w-0 flex-1 flex-col">
          <FormulaBar />
          <div className="flex min-h-0 flex-1">
            <Grid />
            <VerticalScroll />
          </div>
          <SheetTabs />
        </main>
        <SideBar />
      </div>
      <StatusBar />
      <LevelMeter />
      <InputMethodBar />
      <SiteMark />
    </div>
  );
}
